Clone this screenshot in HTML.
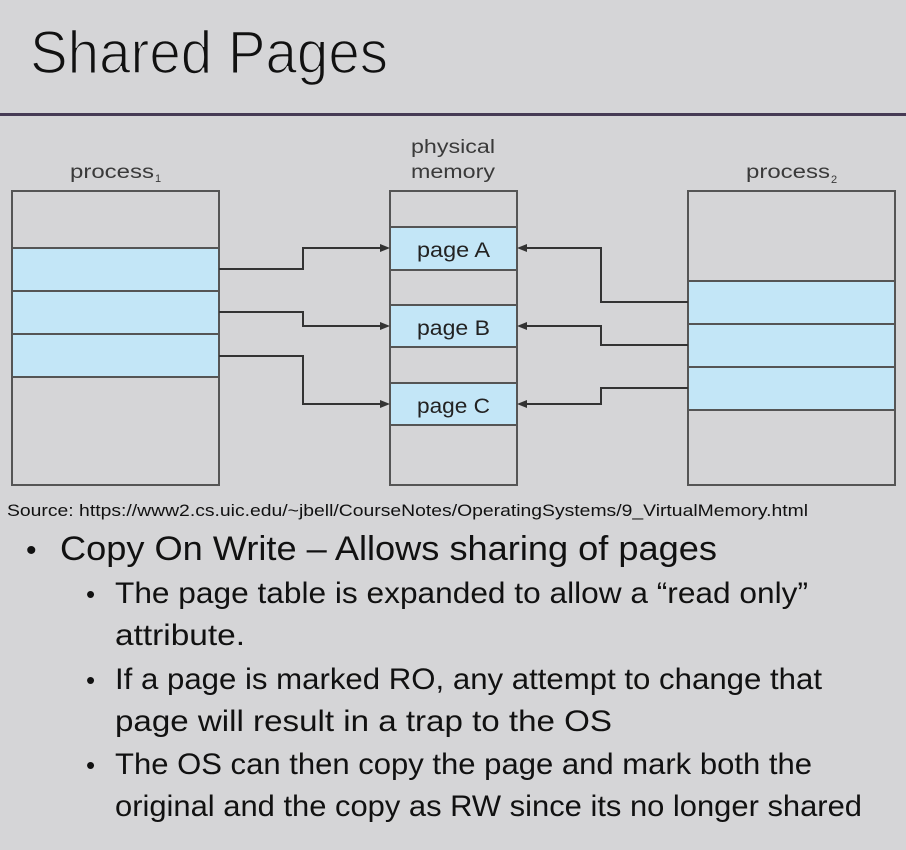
<!DOCTYPE html>
<html><head><meta charset="utf-8"><style>
html,body{margin:0;padding:0;background:#d5d5d7;}
svg{display:block}
</style></head><body>
<svg width="906" height="850" viewBox="0 0 906 850" xmlns="http://www.w3.org/2000/svg" font-family="Liberation Sans, sans-serif">
<rect width="906" height="850" fill="#d5d5d7"/>
<text x="30" y="73" font-size="60" fill="#111" stroke="#d5d5d7" stroke-width="1.6" textLength="358" lengthAdjust="spacingAndGlyphs">Shared Pages</text>
<rect x="0" y="113" width="906" height="3" fill="#463b55"/>

<g fill="#3a3a3a" font-size="19">
<text x="70" y="178" textLength="84" lengthAdjust="spacingAndGlyphs">process</text><text x="155" y="182" font-size="11">1</text>
<text x="411" y="153" textLength="84" lengthAdjust="spacingAndGlyphs">physical</text>
<text x="411" y="178" textLength="84" lengthAdjust="spacingAndGlyphs">memory</text>
<text x="746" y="178" textLength="84" lengthAdjust="spacingAndGlyphs">process</text><text x="831" y="183" font-size="11">2</text>
</g>

<g stroke="#555" stroke-width="2">
<rect x="12" y="191" width="207" height="294" fill="#d5d5d7"/>
<rect x="12" y="248" width="207" height="129" fill="#c3e6f7"/>
<line x1="12" y1="291" x2="219" y2="291"/><line x1="12" y1="334" x2="219" y2="334"/>
<rect x="390" y="191" width="127" height="294" fill="#d5d5d7"/>
<rect x="390" y="227" width="127" height="43" fill="#c3e6f7"/>
<rect x="390" y="305" width="127" height="42" fill="#c3e6f7"/>
<rect x="390" y="383" width="127" height="42" fill="#c3e6f7"/>
<rect x="688" y="191" width="207" height="294" fill="#d5d5d7"/>
<rect x="688" y="281" width="207" height="129" fill="#c3e6f7"/>
<line x1="688" y1="324" x2="895" y2="324"/><line x1="688" y1="367" x2="895" y2="367"/>
</g>
<g fill="#222" font-size="21">
<text x="417" y="257" textLength="73" lengthAdjust="spacingAndGlyphs">page A</text>
<text x="417" y="335" textLength="73" lengthAdjust="spacingAndGlyphs">page B</text>
<text x="417" y="413" textLength="73" lengthAdjust="spacingAndGlyphs">page C</text>
</g>
<g stroke="#333" stroke-width="2" fill="none">
<polyline points="219,269 303,269 303,248 382,248"/>
<polyline points="219,312 303,312 303,326 382,326"/>
<polyline points="219,356 303,356 303,404 382,404"/>
<polyline points="688,302 601,302 601,248 525,248"/>
<polyline points="688,345 601,345 601,326 525,326"/>
<polyline points="688,388 601,388 601,404 525,404"/>
</g>
<g fill="#333">
<polygon points="390,248 380,244 380,252"/><polygon points="390,326 380,322 380,330"/><polygon points="390,404 380,400 380,408"/>
<polygon points="517,248 527,244 527,252"/><polygon points="517,326 527,322 527,330"/><polygon points="517,404 527,400 527,408"/>
</g>

<g fill="#111">
<text x="7" y="516" font-size="17" textLength="801" lengthAdjust="spacingAndGlyphs">Source: https://www2.cs.uic.edu/~jbell/CourseNotes/OperatingSystems/9_VirtualMemory.html</text>
<text x="26" y="560" font-size="30">•</text>
<text x="60" y="560" font-size="34" textLength="657" lengthAdjust="spacingAndGlyphs">Copy On Write – Allows sharing of pages</text>
<g font-size="30">
<text x="86" y="603" font-size="26">•</text>
<text x="115" y="603" textLength="693" lengthAdjust="spacingAndGlyphs">The page table is expanded to allow a “read only”</text>
<text x="115" y="645" textLength="130" lengthAdjust="spacingAndGlyphs">attribute.</text>
<text x="86" y="689" font-size="26">•</text>
<text x="115" y="689" textLength="707" lengthAdjust="spacingAndGlyphs">If a page is marked RO, any attempt to change that</text>
<text x="115" y="731" textLength="497" lengthAdjust="spacingAndGlyphs">page will result in a trap to the OS</text>
<text x="86" y="774" font-size="26">•</text>
<text x="115" y="774" textLength="697" lengthAdjust="spacingAndGlyphs">The OS can then copy the page and mark both the</text>
<text x="115" y="816" textLength="747" lengthAdjust="spacingAndGlyphs">original and the copy as RW since its no longer shared</text>
</g>
</g>
</svg>
</body></html>
